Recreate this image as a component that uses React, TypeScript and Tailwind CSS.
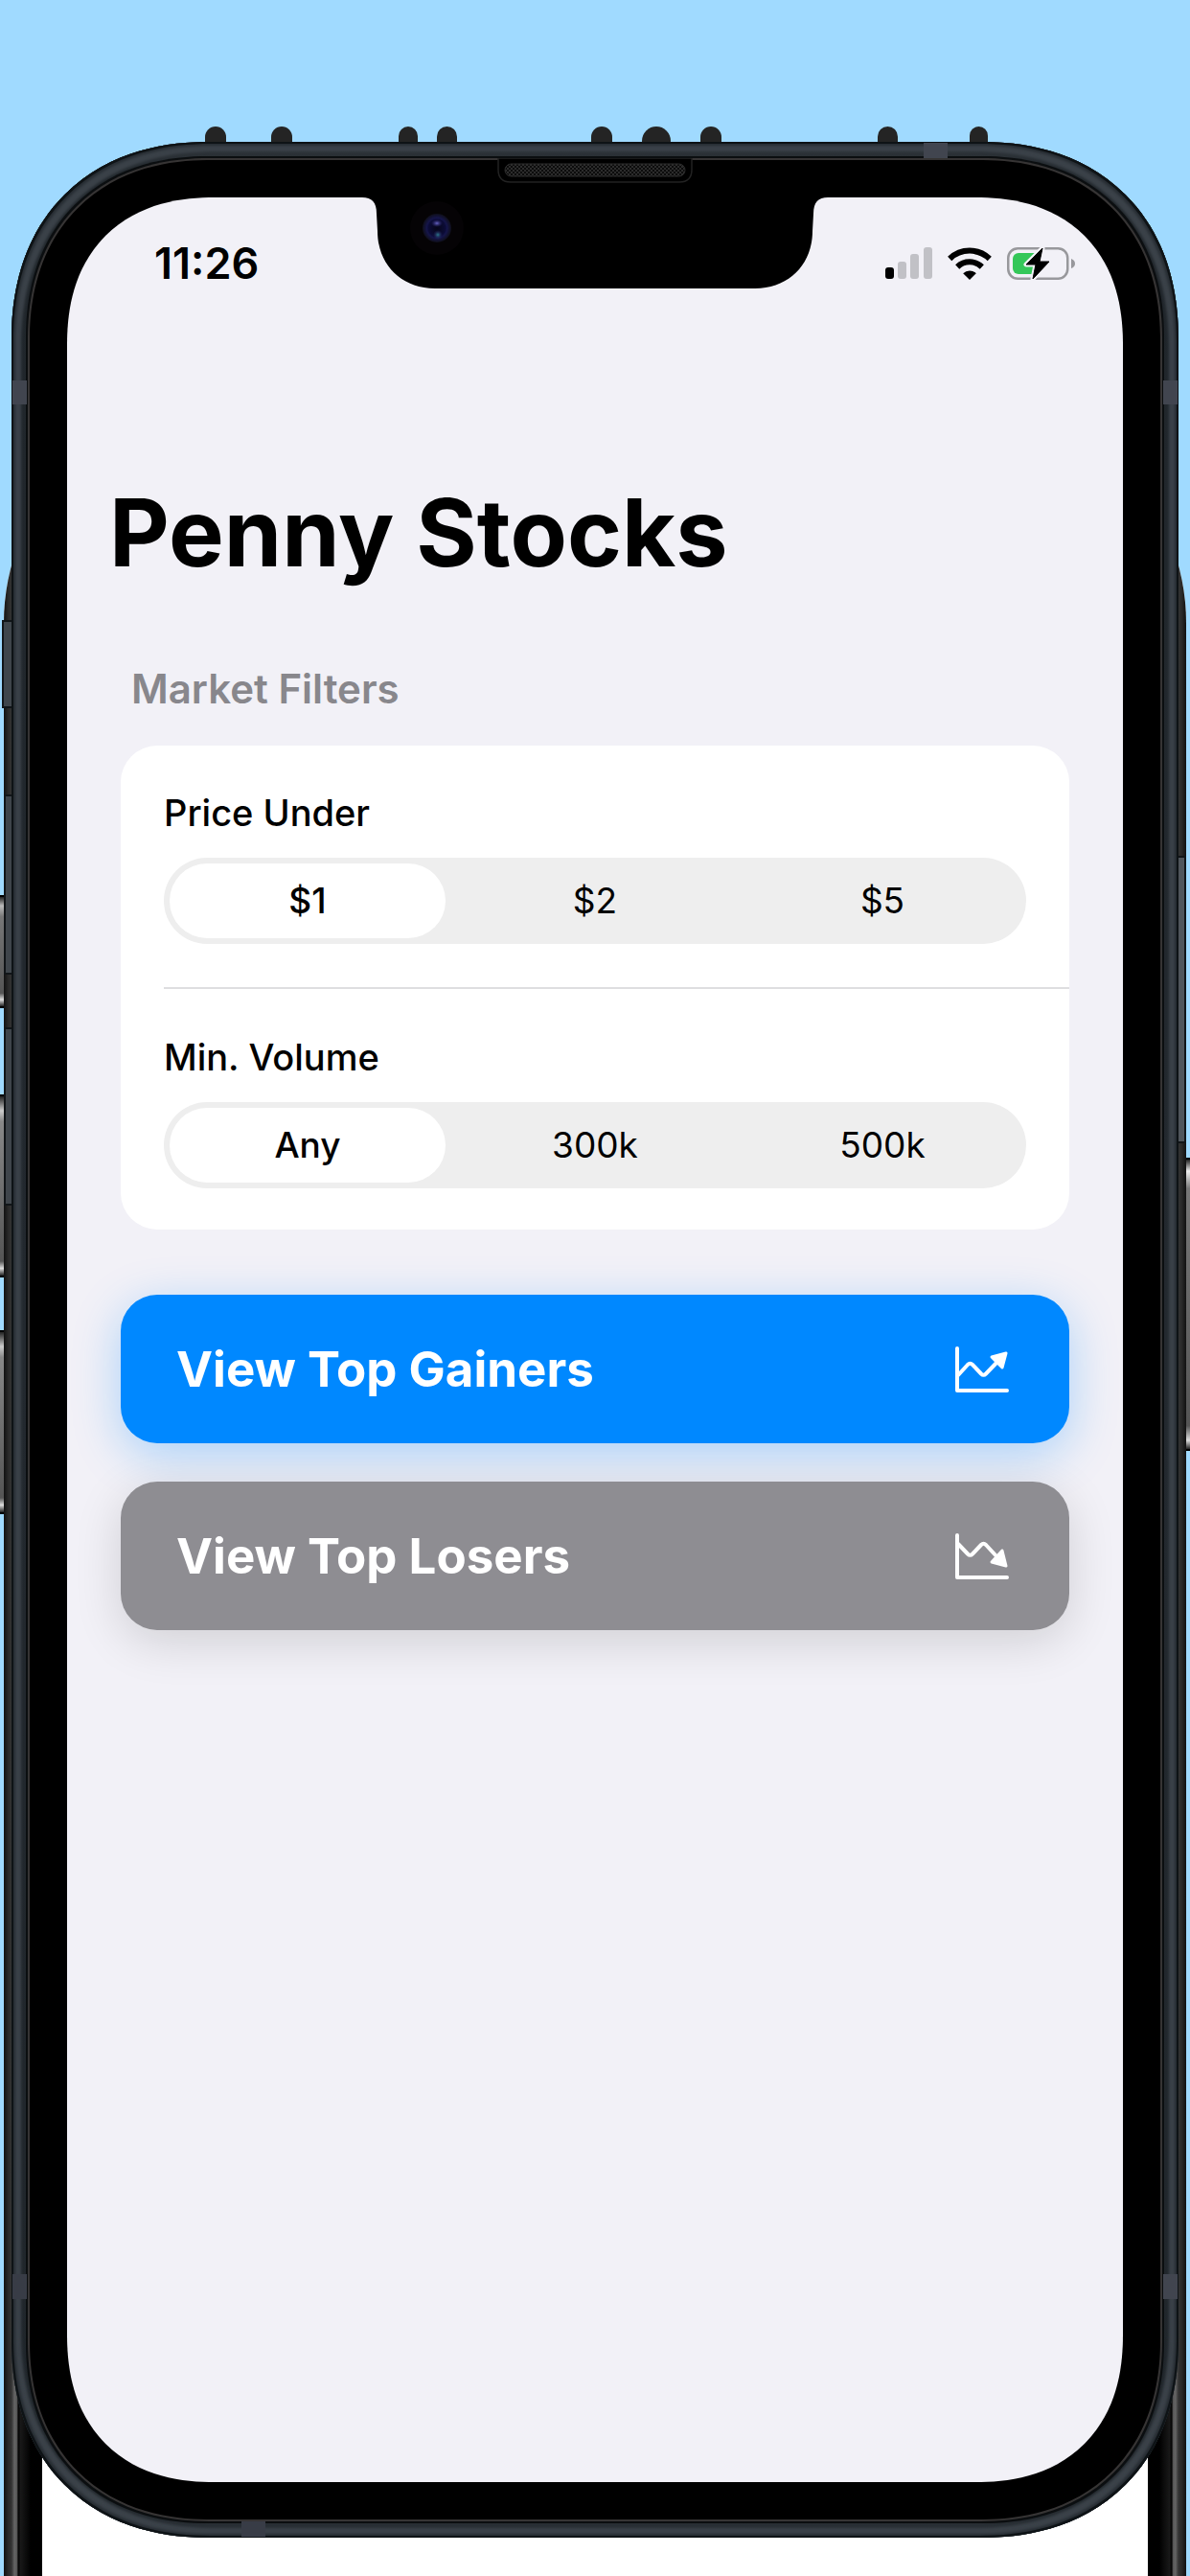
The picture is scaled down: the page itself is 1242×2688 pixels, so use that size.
import { useState } from 'react';

const PRICE_OPTIONS = ['$1', '$2', '$5'];
const VOLUME_OPTIONS = ['Any', '300k', '500k'];

// x, width of the spring tips that stick out behind the top edge
const TIPS = [
  [214, 22], [283, 22], [416, 20], [456, 21], [617, 22], [670, 30], [731, 22], [916, 21], [1012, 19],
];

function SegmentedControl({ name, label, options }: { name: string; label: string; options: string[] }) {
  const [value, setValue] = useState(options[0]);

  return (
    <fieldset>
      <legend className="text-[38px] leading-[48px] font-medium">{label}</legend>
      <div className="mt-[23px] flex h-[90px] gap-3 rounded-full bg-[#eeeeee] p-1.5">
        {options.map(option => (
          <label
            key={option}
            className="flex flex-1 items-center justify-center rounded-full text-[37px] leading-[48px] has-checked:bg-white has-checked:font-medium"
          >
            <input
              type="radio"
              name={name}
              value={option}
              checked={value === option}
              onChange={() => setValue(option)}
              className="sr-only"
            />
            {option}
          </label>
        ))}
      </div>
    </fieldset>
  );
}

function ChartUpIcon() {
  return (
    <svg viewBox="0 0 58 50" className="h-[50px] w-[58px]" fill="none" stroke="white" strokeWidth="4" strokeLinecap="round" strokeLinejoin="round">
      <path d="M3 3V47H55" />
      <path d="M4 31L14 20Q16.500 17.500 19 20L28 29.500Q30.500 32 33 29.500L45 17" />
      <path d="M39 12L54 8L50 23Z" fill="white" strokeWidth="3" />
    </svg>
  );
}

function ChartDownIcon() {
  return (
    <svg viewBox="0 0 58 50" className="h-[50px] w-[58px]" fill="none" stroke="white" strokeWidth="4" strokeLinecap="round" strokeLinejoin="round">
      <path d="M3 3V47H55" />
      <path d="M4 12L14 22.500Q16.500 25 19 22.500L28 13Q30.500 10.500 33 13L45 26" />
      <path d="M39 31L54 35L50 19Z" fill="white" strokeWidth="3" />
    </svg>
  );
}

function SignalIcon() {
  return (
    <svg viewBox="0 0 49 33" className="h-[33px] w-[49px]">
      <rect x="0" y="21" width="9" height="12" rx="3" fill="#000" />
      <rect x="13" y="15" width="9" height="18" rx="3" fill="#c1c1c6" />
      <rect x="26" y="7" width="9" height="26" rx="3" fill="#c1c1c6" />
      <rect x="40" y="0" width="9" height="33" rx="3" fill="#c1c1c6" />
    </svg>
  );
}

function WifiIcon() {
  return (
    <svg viewBox="0 0 46 34" className="h-[34px] w-[46px]" fill="none" stroke="#000" strokeWidth="6">
      <path d="M2.200 12A30 30 0 0 1 43.800 12" />
      <path d="M10.200 20.500A18.500 18.500 0 0 1 35.800 20.500" />
      <path d="M23 34L16.200 27.200A9.600 9.600 0 0 1 29.800 27.200Z" fill="#000" stroke="none" />
    </svg>
  );
}

function BatteryIcon() {
  return (
    <svg viewBox="0 0 71 36" className="h-9 w-[71px]">
      <rect x="1.250" y="2.250" width="62" height="31.500" rx="10" fill="none" stroke="#98989c" strokeWidth="2.500" />
      <path d="M67 13Q71 14.500 71 18T67 23Z" fill="#98989c" />
      <rect x="6" y="7" width="28" height="22" rx="6" fill="#34c759" />
      <path d="M37 2L20 19H30L27 34L44 16H34Z" fill="#000" stroke="#f2f1f7" strokeWidth="5" paintOrder="stroke" strokeLinejoin="round" />
      <path d="M37 2L20 19H30L27 34L44 16H34Z" fill="#000" stroke="#000" strokeWidth="1" strokeLinejoin="round" />
    </svg>
  );
}

function Notch() {
  return (
    <svg viewBox="0 0 486 97" className="absolute left-1/2 -top-px h-[97px] w-[486px] -translate-x-1/2">
      <path
        d="M0 0V1C10 1 15 6 15 18L16 36C16 70 40 96 76 96H410C446 96 470 70 470 36L471 18C471 6 476 1 486 1V0Z"
        fill="#000"
      />
    </svg>
  );
}

function Speaker() {
  return (
    <svg viewBox="0 0 204 26" className="absolute top-[17px] left-1/2 h-[26px] w-[204px] -translate-x-1/2">
      <defs>
        <pattern id="mesh" width="4" height="4" patternUnits="userSpaceOnUse">
          <rect width="4" height="4" fill="#0c0c0c" />
          <rect width="2" height="2" fill="#2c2c2c" />
          <rect x="2" y="2" width="2" height="2" fill="#2c2c2c" />
        </pattern>
      </defs>
      <path d="M1 0V12Q1 25 14 25H190Q203 25 203 12V0Z" fill="#000" stroke="#222" strokeWidth="1.500" />
      <rect x="8" y="6" width="188" height="13" rx="6.500" fill="url(#mesh)" stroke="#2c2c2c" />
    </svg>
  );
}

function Camera() {
  return (
    <svg viewBox="0 0 58 58" className="absolute top-[3px] left-1/2 -ml-[194px] size-[58px]">
      <defs>
        <radialGradient id="lens">
          <stop offset="0" stopColor="#060618" />
          <stop offset="0.600" stopColor="#0c0c38" />
          <stop offset="0.700" stopColor="#15154a" />
          <stop offset="1" stopColor="#0f0f1a" />
        </radialGradient>
        <radialGradient id="glintTop">
          <stop offset="0" stopColor="#6a66c8" />
          <stop offset="1" stopColor="#2a2770" stopOpacity="0" />
        </radialGradient>
        <radialGradient id="glintBottom">
          <stop offset="0" stopColor="#2b7a8c" />
          <stop offset="1" stopColor="#2a1f60" stopOpacity="0" />
        </radialGradient>
      </defs>
      <circle cx="29" cy="29" r="28" fill="#050305" />
      <circle cx="29" cy="29" r="15" fill="url(#lens)" />
      <ellipse cx="29" cy="24" rx="6" ry="4" fill="url(#glintTop)" />
      <ellipse cx="30" cy="36" rx="5" ry="5" fill="url(#glintBottom)" />
    </svg>
  );
}

/* Phones stacked behind the front one: only their edges and side keys show */
function BackDevices() {
  return (
    <div aria-hidden="true">
      <div className="absolute top-[934px] left-0 h-[118px] w-2 border-y-2 border-black bg-[linear-gradient(#222,#bbb_8%,#777_18%,#555_88%,#ddd_94%,#222)]" />
      <div className="absolute top-[1142px] left-0 h-[191px] w-2 border-y-2 border-black bg-[linear-gradient(#222,#ccc_8%,#888_14%,#555_92%,#ddd_96%,#222)]" />
      <div className="absolute top-[1388px] left-0 h-[192px] w-2 border-y-2 border-black bg-[linear-gradient(#222,#ccc_8%,#888_14%,#555_92%,#ddd_96%,#222)]" />
      <div className="absolute top-[1208px] right-0 h-[306px] w-2 border-y-2 border-black bg-[linear-gradient(#222,#eee_4%,#777_10%,#555_92%,#ddd_97%,#222)]" />
      <div className="absolute inset-x-1 top-[420px] bottom-0 flex overflow-hidden rounded-t-[230px] bg-white">
        <div className="w-10 bg-[linear-gradient(90deg,#111,#2a2a2a_12%,#333_20%,#666_28%,#555_34%,#111_37%,#000_40%,#1a1a1a_42%,#000_70%)]" />
        <div className="flex-1" />
        <div className="w-10 bg-[linear-gradient(270deg,#111,#2a2a2a_12%,#333_20%,#666_28%,#555_34%,#111_37%,#000_40%,#1a1a1a_42%,#000_70%)]" />
      </div>
      <div className="absolute top-[647px] left-[2px] h-[92px] w-3 border-2 border-[#111518] bg-[#3f454b]" />
      <div className="absolute top-[829px] left-1 h-[188px] w-3 border-2 border-[#111518] bg-[#3f454b]" />
      <div className="absolute top-[1072px] left-1 h-[186px] w-3 border-2 border-[#111518] bg-[#3f454b]" />
      <div className="absolute top-[893px] right-1 h-[300px] w-3 border-2 border-[#111518] bg-[#50555b]" />
    </div>
  );
}

export default function App() {
  return (
    <main className="relative flex min-h-screen flex-col overflow-hidden bg-[#a0daff] px-3 pt-[148px] pb-10 font-['Inter',sans-serif] text-black">
      <svg viewBox="0 0 1242 30" className="absolute inset-x-0 top-[132px] w-full" fill="#242424" aria-hidden="true">
        {TIPS.map(([x, w]) => (
          <rect key={x} x={x} y="0" width={w} height="30" rx={w / 2} />
        ))}
      </svg>
      <BackDevices />

      {/* Front phone: metal band, glass rim, bezel */}
      <div className="relative flex flex-1 flex-col rounded-[206px] bg-[linear-gradient(#30363c,#20262b_40px,#23292f_50%,#20262b_calc(100%-40px),#2c3238)] p-[17px] shadow-[inset_0_0_0_2px_#0e1316,inset_0_0_3px_4px_#262c32,inset_0_0_3px_10px_#3b4249] [corner-shape:superellipse(1.15)]">
        <div className="absolute top-px right-[241px] h-4 w-[25px] bg-[#41454f]" />
        <div className="absolute bottom-px left-[240px] h-4 w-[25px] bg-[#383c46]" />
        <div className="absolute top-[249px] left-px h-[25px] w-[15px] bg-[#41454f]" />
        <div className="absolute top-[249px] right-px h-[25px] w-[15px] bg-[#41454f]" />
        <div className="absolute bottom-[249px] left-px h-[26px] w-[15px] bg-[#383c46]" />
        <div className="absolute right-px bottom-[249px] h-[26px] w-[15px] bg-[#41454f]" />

        <div className="flex flex-1 flex-col rounded-[189px] border-2 border-[#363434] bg-black p-[39px] shadow-[0_0_0_2px_#0b0e10] [corner-shape:superellipse(1.15)]">
          <div className="relative flex flex-1 flex-col rounded-[154px] bg-[#f2f1f7] [corner-shape:superellipse(1.2)]">
            <Notch />
            <Camera />

            <header className="flex h-[137px] items-center justify-between pr-[50px] pl-[91px]">
              <time className="text-[45px] leading-[48px] font-semibold">11:26</time>
              <div className="flex items-center gap-4">
                <SignalIcon />
                <WifiIcon />
                <BatteryIcon />
              </div>
            </header>

            <h1 className="mt-[153px] pl-11 text-[97px] leading-[120px] font-bold">Penny Stocks</h1>

            <div className="px-14">
              <h2 className="mt-[79px] pl-[11px] text-[42px] leading-[48px] font-semibold text-[#88878c]">Market Filters</h2>

              <section className="mt-[35px] rounded-[38px] bg-white pl-[45px]">
                <div className="pt-[46px] pr-[45px] pb-[45px]">
                  <SegmentedControl name="price" label="Price Under" options={PRICE_OPTIONS} />
                </div>
                <hr className="border-t-2 border-[#dedee0]" />
                <div className="pt-[47px] pr-[45px] pb-[43px]">
                  <SegmentedControl name="volume" label="Min. Volume" options={VOLUME_OPTIONS} />
                </div>
              </section>

              <button
                type="button"
                className="mt-[68px] flex h-[155px] w-full items-center justify-between rounded-[38px] bg-[#0088ff] pr-[62px] pl-[58px] text-[51px] leading-[64px] font-bold text-white shadow-[0_12px_50px_rgb(0_136_255/0.3)]"
              >
                View Top Gainers
                <ChartUpIcon />
              </button>
              <button
                type="button"
                className="mt-10 flex h-[155px] w-full items-center justify-between rounded-[38px] bg-[#8e8d92] pr-[62px] pl-[58px] text-[51px] leading-[64px] font-bold text-white shadow-[0_12px_50px_rgb(0_0_0/0.14)]"
              >
                View Top Losers
                <ChartDownIcon />
              </button>
            </div>
          </div>
        </div>
        <Speaker />
      </div>
    </main>
  );
}
